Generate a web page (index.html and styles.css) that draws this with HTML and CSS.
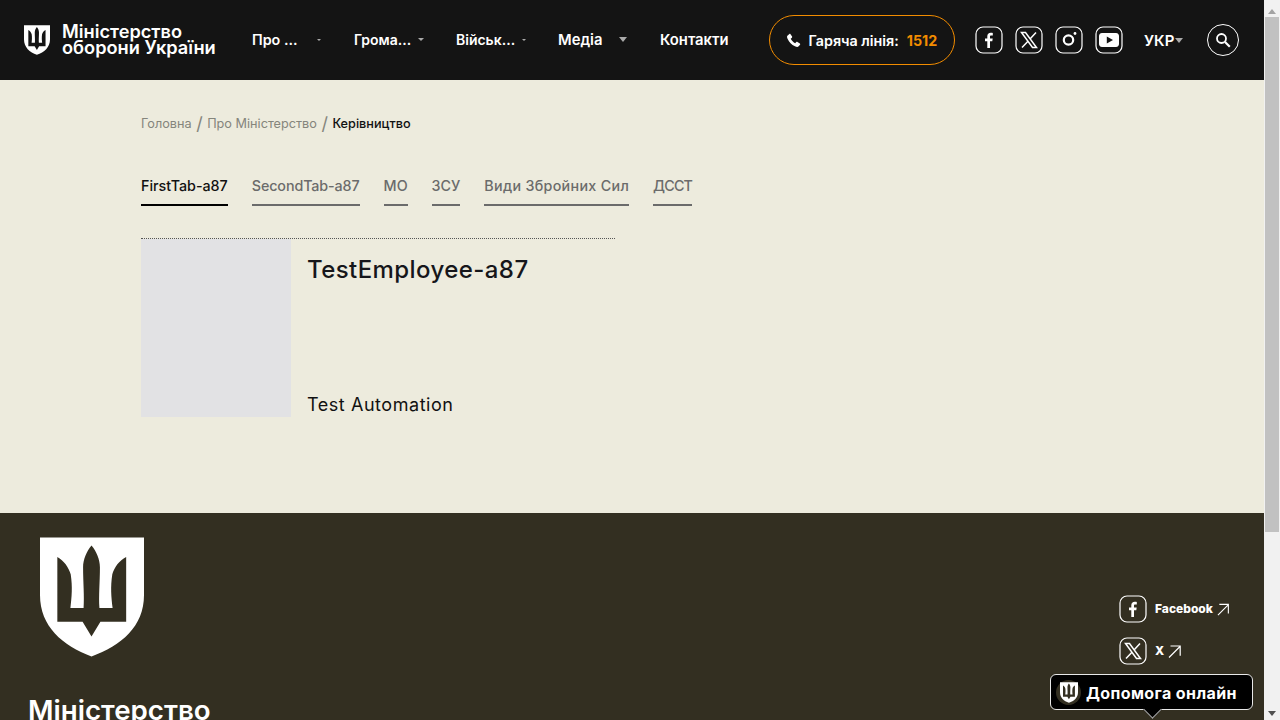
FILE: index.html
```html
<!DOCTYPE html>
<html lang="uk">
<head>
<meta charset="utf-8">
<title>Керівництво</title>
<link rel="stylesheet" href="styles.css">
</head>
<body>
<svg class="defs" width="0" height="0" aria-hidden="true">
  <defs>
    <symbol id="shield" viewBox="0 0 105 120">
      <path fill-rule="evenodd" fill="currentColor" d="M0 0H105V58C105 90 82 109 52 120C23 109 0 90 0 58ZM52 8C47 14 43.500 22 43.500 30C43.500 45 45 60 44 71H30.700C32 60 33 50 31 37C29 30 24 23 17.500 19.500V85H43L52 100L61 85H87V19.500C80 23 75 30 73 37C71 50 72 60 73.300 71H60C59 60 60.500 45 60.500 30C60.500 22 57 14 52 8Z"/>
    </symbol>
    <symbol id="fb" viewBox="0 0 28 28">
      <rect x="1" y="1" width="26" height="26" rx="7" fill="none" stroke="currentColor" stroke-width="1.200"/>
      <path fill="currentColor" d="M12.300 22V15.200H10V12.400H12.300V10.300C12.300 8 13.700 6.800 15.700 6.800C16.700 6.800 17.500 6.900 17.800 6.900V9.400H16.300C15.200 9.400 15 9.900 15 10.700V12.400H17.700L17.300 15.200H15V22Z"/>
    </symbol>
    <symbol id="x" viewBox="0 0 28 28">
      <rect x="1" y="1" width="26" height="26" rx="7" fill="none" stroke="currentColor" stroke-width="1.200"/>
      <path fill="none" stroke="currentColor" stroke-width="1.500" d="M6.500 6.500H10.500L21.500 21.500H17.500ZM21 6.500L15 13M13 15.200L7 21.500"/>
    </symbol>
    <symbol id="ig" viewBox="0 0 28 28">
      <rect x="1" y="1" width="26" height="26" rx="7" fill="none" stroke="currentColor" stroke-width="1.200"/>
      <circle cx="13.500" cy="14" r="4.700" fill="none" stroke="currentColor" stroke-width="2.200"/>
      <circle cx="20" cy="7.500" r="1.400" fill="currentColor"/>
    </symbol>
    <symbol id="yt" viewBox="0 0 28 28">
      <rect x="1" y="1" width="26" height="26" rx="7" fill="none" stroke="currentColor" stroke-width="1.200"/>
      <path fill-rule="evenodd" fill="currentColor" d="M7 7H21C23 7 24 8.500 24 10V18C24 19.500 23 21 21 21H7C5 21 4 19.500 4 18V10C4 8.500 5 7 7 7ZM11.800 10.500V17.500L18 14Z"/>
    </symbol>
    <symbol id="arrow" viewBox="0 0 13 13">
      <path fill="none" stroke="currentColor" stroke-width="1.200" d="M1 12.500L12 1.500M2.500 1H12.200V10.700"/>
    </symbol>
  </defs>
</svg>

<header class="topbar">
  <a class="brand" href="#">
    <svg class="brand-mark"><use href="#shield"/></svg>
    <span class="brand-name">Міністерство<br>оборони України</span>
  </a>
  <nav class="nav">
    <a class="nav-item nav-pro" href="#"><span class="nav-label">Про ...</span><i class="caret caret-xs"></i></a>
    <a class="nav-item nav-hromada" href="#"><span class="nav-label">Грома...</span><i class="caret caret-s"></i></a>
    <a class="nav-item nav-army" href="#"><span class="nav-label">Військ...</span><i class="caret caret-xs"></i></a>
    <a class="nav-item nav-media" href="#"><span class="nav-label">Медіа</span><i class="caret"></i></a>
    <a class="nav-item" href="#"><span class="nav-label">Контакти</span></a>
  </nav>
  <a class="hotline" href="#">
    <svg class="phone" viewBox="0 0 16 16"><path fill="currentColor" d="M3.600 1L1.500 2.800C.9 3.400 1 4.800 1.800 6.500C3.300 10 6 12.700 9.500 14.200C11.200 15 12.600 15.100 13.200 14.500L15 12.400C15.300 12 15.200 11.500 14.800 11.200L12.200 9.500C11.800 9.300 11.400 9.300 11 9.700L9.800 11C8 10.200 5.800 8 5 6.200L6.300 5C6.700 4.600 6.700 4.200 6.500 3.800L4.800 1.200C4.500.8 4 .7 3.600 1Z"/></svg>
    <span class="hotline-text">Гаряча лінія:</span>
    <span class="hotline-num">1512</span>
  </a>
  <div class="socials">
    <svg class="social"><use href="#fb"/></svg>
    <svg class="social"><use href="#x"/></svg>
    <svg class="social"><use href="#ig"/></svg>
    <svg class="social"><use href="#yt"/></svg>
  </div>
  <a class="lang" href="#">УКР<i class="caret"></i></a>
  <a class="search" href="#" aria-label="Пошук">
    <svg viewBox="0 0 16 16"><circle cx="6.500" cy="6.500" r="4.500" fill="none" stroke="currentColor" stroke-width="1.800"/><path stroke="currentColor" stroke-width="2.200" d="M10 10L14.800 14.800"/></svg>
  </a>
</header>

<main class="content">
  <div class="crumbs">
    <a href="#">Головна</a><span class="sep">/</span><a href="#">Про Міністерство</a><span class="sep">/</span><span class="crumb-here">Керівництво</span>
  </div>
  <div class="tabs">
    <a class="tab tab-active" href="#">FirstTab-a87</a>
    <a class="tab tab-second" href="#">SecondTab-a87</a>
    <a class="tab" href="#">МО</a>
    <a class="tab" href="#">ЗСУ</a>
    <a class="tab tab-kinds" href="#">Види Збройних Сил</a>
    <a class="tab tab-dsst" href="#">ДССТ</a>
  </div>
  <article class="person">
    <div class="photo"></div>
    <div class="person-info">
      <h2 class="person-name">TestEmployee-a87</h2>
      <p class="person-role">Test Automation</p>
    </div>
  </article>
</main>

<footer class="footer">
  <div class="footer-left">
    <svg class="footer-mark"><use href="#shield"/></svg>
    <div class="footer-name">Міністерство</div>
  </div>
  <div class="footer-socials">
    <a class="fs-row" href="#"><svg class="social"><use href="#fb"/></svg><span class="fs-label">Facebook</span><svg class="fs-arrow"><use href="#arrow"/></svg></a>
    <a class="fs-row" href="#"><svg class="social"><use href="#x"/></svg><span class="fs-label">X</span><svg class="fs-arrow"><use href="#arrow"/></svg></a>
  </div>
</footer>

<a class="help" href="#">
  <span class="help-badge"><svg><use href="#shield"/></svg></span>
  <span class="help-text">Допомога онлайн</span>
  <i class="help-tail"></i>
</a>

<div class="scrollbar" aria-hidden="true">
  <i class="sb-up"></i>
  <i class="sb-thumb"></i>
  <i class="sb-down"></i>
</div>
</body>
</html>
```
FILE: styles.css
```css
* { box-sizing: border-box; }
html { overflow: hidden; height: 100%; }
body { margin: 0; padding-right: 16px; background: #edebdd; font-family: "Inter", "Liberation Sans", sans-serif; color: #111; }
a { color: inherit; text-decoration: none; }
.defs { position: absolute; }

.topbar { height: 80px; background: #141414; color: #fff; display: flex; align-items: center; padding: 0 25px 0 24px; font-weight: 700; }
.brand { display: flex; align-items: center; gap: 12px; width: 228px; flex: none; }
.brand-mark { width: 26px; height: 30px; flex: none; }
.brand-name { font-size: 18.200px; line-height: 16px; white-space: nowrap; font-weight: 600; margin-bottom: 2px; }
.nav { display: flex; align-items: center; font-size: 14.800px; font-weight: 600; width: 477px; flex: none; padding-bottom: 1px; }
.nav-item { display: flex; align-items: center; }
.nav-pro, .nav-hromada, .nav-army, .nav-media { width: 102px; }
.nav-label { white-space: nowrap; }
.nav-pro .nav-label { width: 65px; font-size: 14.300px; }
.nav-hromada .nav-label { width: 64px; font-size: 14px; }
.nav-army .nav-label { width: 66px; font-size: 14px; }
.nav-media .nav-label { width: 61px; }
.caret { width: 0; height: 0; border: 4.500px solid transparent; border-top: 5px solid #aaa; border-bottom: 0; display: block; }
.caret-s { border-width: 3px 3px 0; }
.caret-xs { border-width: 2px 2.500px 0; }
.hotline { margin-left: 40px; width: 186px; height: 50px; border: 1px solid #f28c00; border-radius: 25px; display: flex; align-items: center; padding-left: 16px; font-size: 14.300px; font-weight: 600; flex: none; }
.phone { width: 15px; height: 15px; flex: none; }
.hotline-text { margin-left: 7.500px; white-space: nowrap; }
.hotline-num { margin-left: 8px; color: #f28c00; font-size: 14.300px; font-weight: 700; }
.socials { display: flex; gap: 12px; margin-left: 20px; flex: none; }
.social { width: 28px; height: 28px; flex: none; display: block; }
.lang { margin-left: 21px; display: flex; align-items: center; gap: 1px; font-size: 15px; font-weight: 600; width: 63px; flex: none; }
.search { width: 32px; height: 32px; border: 1px solid #fff; border-radius: 50%; display: flex; align-items: center; justify-content: center; flex: none; }
.search svg { width: 16px; height: 16px; }

.content { height: 433px; padding: 36px 0 0 141px; }
.crumbs { font-size: 12.700px; line-height: 16px; color: #85857c; display: flex; align-items: center; }
.sep { font-size: 18px; margin: 0 4.500px; }
.crumb-here { color: #111; font-weight: 500; }
.tabs { display: flex; gap: 24px; margin-top: 38px; font-size: 14.300px; font-weight: 500; }
.tab { height: 36px; padding-top: 7px; border-bottom: 2px solid #6b6b6b; color: #6b6b6b; white-space: nowrap; }
.tab-active { color: #111; border-color: #000; }
.tab-second { letter-spacing: -.1px; }
.tab-kinds { letter-spacing: .3px; }
.tab-dsst { letter-spacing: -.8px; }
.person { display: flex; gap: 16px; width: 474px; margin-top: 32px; border-top: 1px dotted #555; }
.photo { width: 150px; height: 178px; background: #e2e2e4; flex: none; }
.person-info { display: flex; flex-direction: column; justify-content: space-between; flex: 1; }
.person-name { margin: 16px 0 0; font-size: 24px; line-height: 30px; font-weight: 500; letter-spacing: .42px; color: #16161a; }
.person-role { margin: 0; font-size: 18px; line-height: 24px; letter-spacing: .55px; color: #111; }

.footer { background: #332f21; height: 400px; color: #fff; display: flex; justify-content: space-between; padding: 24px 35px 0 28px; }
.footer-mark { width: 104px; height: 120px; display: block; margin-left: 12px; }
.footer-name { font-size: 27.700px; line-height: 32px; font-weight: 600; margin-top: 37px; }
.footer-socials { display: flex; flex-direction: column; gap: 14px; padding-top: 58px; }
.fs-row { display: flex; align-items: center; gap: 8px; width: 110px; }
.fs-label { font-size: 12px; font-weight: 800; margin-top: -2px; }
.fs-arrow { width: 13px; height: 13px; margin-left: -4px; }

.help { position: fixed; left: 1050px; top: 674px; width: 203px; height: 36px; background: #000; border: 1px solid #e8e8e8; border-radius: 6px; display: flex; align-items: center; padding-left: 5px; color: #fff; }
.help-badge { width: 25px; height: 25px; border-radius: 50%; background: #332f21; display: flex; align-items: center; justify-content: center; flex: none; }
.help-badge svg { width: 18px; height: 21px; }
.help-text { margin: 1px 0 0 5px; font-size: 16px; font-weight: 700; letter-spacing: .4px; white-space: nowrap; }
.help-tail { position: absolute; left: 95px; bottom: -7px; width: 13px; height: 13px; background: #000; border-right: 1px solid #aaa; border-bottom: 1px solid #aaa; transform: rotate(45deg); }

.scrollbar { position: fixed; top: 0; right: 0; bottom: 0; width: 16px; background: #f1f1f1; display: flex; flex-direction: column; align-items: center; }
.sb-up { margin-top: 9px; width: 0; height: 0; border: 4.500px solid transparent; border-top: 0; border-bottom: 5px solid #a3a3a3; }
.sb-thumb { margin-top: 3px; width: 14px; height: 515px; background: #c1c1c1; }
.sb-down { margin-top: auto; margin-bottom: 4px; width: 0; height: 0; border: 4.500px solid transparent; border-bottom: 0; border-top: 5px solid #505050; }
```
